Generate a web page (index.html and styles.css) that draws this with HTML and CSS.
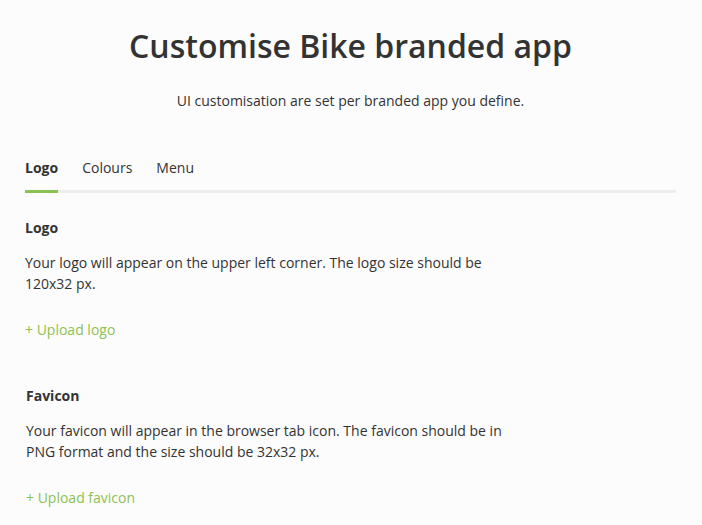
FILE: index.html
```html
<!DOCTYPE html>
<html lang="en">
<head>
<meta charset="utf-8">
<title>Customise Bike branded app</title>
<link rel="stylesheet" href="styles.css">
</head>
<body>
<main class="page">
  <header class="intro">
    <h1 class="title">Customise Bike branded app</h1>
    <p class="subtitle">UI customisation are set per branded app you define.</p>
  </header>
  <nav class="tabs">
    <a class="tab active">Logo</a>
    <a class="tab">Colours</a>
    <a class="tab">Menu</a>
  </nav>
  <section class="section">
    <h2 class="section-title">Logo</h2>
    <p class="section-text">Your logo will appear on the upper left corner. The logo size should be 120x32 px.</p>
    <a class="upload">+ Upload logo</a>
  </section>
  <section class="section section-second">
    <h2 class="section-title">Favicon</h2>
    <p class="section-text">Your favicon will appear in the browser tab icon. The favicon should be in PNG format and the size should be 32x32 px.</p>
    <a class="upload">+ Upload favicon</a>
  </section>
</main>
</body>
</html>
```

FILE: styles.css
```css
html, body {
  margin: 0;
  padding: 0;
  background: #fcfcfc;
}
body {
  font-family: "Open Sans", "Liberation Sans", sans-serif;
  color: #333333;
  font-size: 14px;
  line-height: 21px;
}
.page {
  padding: 0 26px 0 25px;
}
.intro {
  text-align: center;
  padding-top: 27px;
}
.title {
  margin: 0;
  font-size: 32px;
  line-height: 38px;
  font-weight: 600;
  color: #333333;
}
.subtitle {
  margin: 25px 0 0;
  font-size: 14px;
}
.tabs {
  display: flex;
  gap: 24px;
  margin-top: 46px;
  border-bottom: 3px solid #eeeeee;
}
.tab {
  display: block;
  padding-bottom: 12px;
  margin-bottom: -3px;
  border-bottom: 3px solid transparent;
  color: #333333;
  cursor: pointer;
}
.tab.active {
  font-weight: 700;
  border-bottom-color: #8cc152;
}
.section {
  max-width: 500px;
  padding-top: 24px;
}
.section-second {
  padding-top: 45px;
  padding-left: 1px;
}
.section-title {
  margin: 0;
  font-size: 14px;
  line-height: 21px;
  font-weight: 700;
}
.section-text {
  margin: 14px 0 0;
}
.upload {
  display: block;
  margin-top: 25px;
  color: #8cc152;
  cursor: pointer;
}
```
